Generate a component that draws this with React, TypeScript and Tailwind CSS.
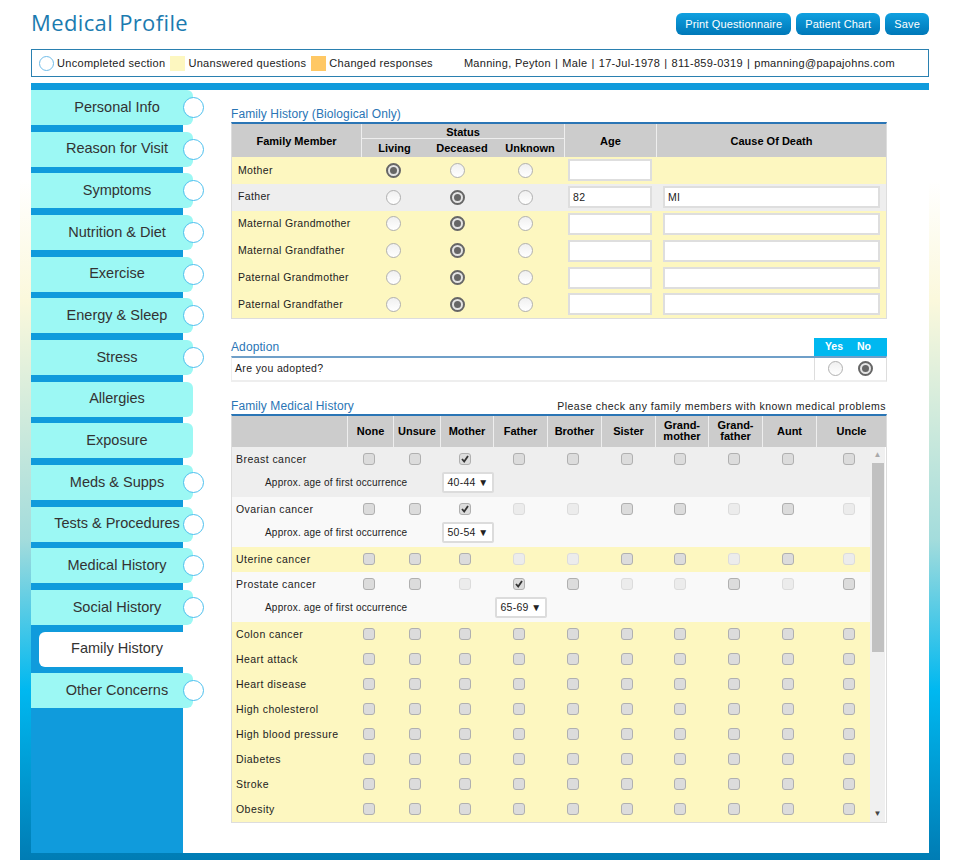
import React from 'react';

const tabs = [
  { name: 'Personal Info', dot: true },
  { name: 'Reason for Visit', dot: true },
  { name: 'Symptoms', dot: true },
  { name: 'Nutrition & Diet', dot: true },
  { name: 'Exercise', dot: true },
  { name: 'Energy & Sleep', dot: true },
  { name: 'Stress', dot: true },
  { name: 'Allergies', dot: false },
  { name: 'Exposure', dot: false },
  { name: 'Meds & Supps', dot: true },
  { name: 'Tests & Procedures', dot: true },
  { name: 'Medical History', dot: true },
  { name: 'Social History', dot: true },
  { name: 'Family History', dot: false, active: true },
  { name: 'Other Concerns', dot: true },
];

const patient = ['Manning, Peyton', 'Male', '17-Jul-1978', '811-859-0319', 'pmanning@papajohns.com'];

const Radio = ({ on }: { on?: boolean }) =>
  on ? (
    <span className="w-[15px] h-[15px] rounded-full border-2 border-[#666] bg-[#e4e4e4] flex items-center justify-center">
      <span className="w-[7px] h-[7px] rounded-full bg-[#666]" />
    </span>
  ) : (
    <span className="w-[15px] h-[15px] rounded-full border border-[#b0b0b0] bg-gradient-to-b from-[#f0f0f0] to-white" />
  );

// n = normal, d = disabled, c = checked
const Check = ({ kind }: { kind: string }) => {
  if (kind === 'd') return <span className="w-[12px] h-[12px] rounded-[3px] border border-[#dcdcdc] bg-[#ececec]" />;
  return (
    <span className="w-[12px] h-[12px] rounded-[3px] border border-[#b0b0b0] bg-[#dcdcdc] flex items-center justify-center">
      {kind === 'c' && (
        <svg width="10" height="10" viewBox="0 0 10 10">
          <path d="M2 5 L4.2 7.6 L8 2" fill="none" stroke="#333" strokeWidth="1.8" />
        </svg>
      )}
    </span>
  );
};

const members = [
  { name: 'Mother', status: 0, bg: 'bg-[#fdf7c0]', age: '', cause: null as string | null },
  { name: 'Father', status: 1, bg: 'bg-[#eeeeee]', age: '82', cause: 'MI' },
  { name: 'Maternal Grandmother', status: 1, bg: 'bg-[#fdf7c0]', age: '', cause: '' },
  { name: 'Maternal Grandfather', status: 1, bg: 'bg-[#fdf7c0]', age: '', cause: '' },
  { name: 'Paternal Grandmother', status: 1, bg: 'bg-[#fdf7c0]', age: '', cause: '' },
  { name: 'Paternal Grandfather', status: 1, bg: 'bg-[#fdf7c0]', age: '', cause: '' },
];

const heads = ['None', 'Unsure', 'Mother', 'Father', 'Brother', 'Sister', 'Grand-\nmother', 'Grand-\nfather', 'Aunt', 'Uncle'];
const headWidths = ['w-[46px]', 'w-[47px]', 'w-[53px]', 'w-[54px]', 'w-[54px]', 'w-[54px]', 'w-[53px]', 'w-[54px]', 'w-[54px]', 'w-[69px]'];
const bodyCols = 'grid grid-cols-[116px_42px_50px_50px_58px_50px_58px_48px_60px_48px_58px]';

const conditions = [
  { name: 'Breast cancer', checks: 'nncnnnnnnn', bg: 'bg-[#eeeeee]', age: '40-44', ageCol: 'mother' },
  { name: 'Ovarian cancer', checks: 'nncddnndnd', bg: 'bg-[#f9f9f9]', age: '50-54', ageCol: 'mother' },
  { name: 'Uterine cancer', checks: 'nnnddnndnd', bg: 'bg-[#fdf7c0]' },
  { name: 'Prostate cancer', checks: 'nndcnddndn', bg: 'bg-[#f9f9f9]', age: '65-69', ageCol: 'father' },
  { name: 'Colon cancer', checks: 'nnnnnnnnnn', bg: 'bg-[#fdf7c0]' },
  { name: 'Heart attack', checks: 'nnnnnnnnnn', bg: 'bg-[#fdf7c0]' },
  { name: 'Heart disease', checks: 'nnnnnnnnnn', bg: 'bg-[#fdf7c0]' },
  { name: 'High cholesterol', checks: 'nnnnnnnnnn', bg: 'bg-[#fdf7c0]' },
  { name: 'High blood pressure', checks: 'nnnnnnnnnn', bg: 'bg-[#fdf7c0]' },
  { name: 'Diabetes', checks: 'nnnnnnnnnn', bg: 'bg-[#fdf7c0]' },
  { name: 'Stroke', checks: 'nnnnnnnnnn', bg: 'bg-[#fdf7c0]' },
  { name: 'Obesity', checks: 'nnnnnnnnnn', bg: 'bg-[#fdf7c0]' },
];

const SectionTitle = ({ children }: { children: React.ReactNode }) => (
  <span className="text-[12px] tracking-[0.1px] text-[#2a75b5]">{children}</span>
);

const AgeSelect = ({ value }: { value: string }) => (
  <span className="w-[52px] h-[21px] rounded-[2px] border-2 border-[#dcdcdc] bg-white pl-[3px] pr-[2px] pt-[1px] flex items-center justify-between text-[10.5px] tracking-[0.3px]">
    {value}
    <span className="text-[10px] mr-[2px]">▼</span>
  </span>
);

export default function App() {
  return (
    <div className="w-[960px] h-[860px] bg-white overflow-hidden font-['Liberation_Sans',Arial,sans-serif] text-[11px] text-[#222]">
      <div className="w-[920px] h-[860px] ml-[20px] px-[11px] pb-[7px] bg-[linear-gradient(180deg,#ffffff_0px,#ffffff_180px,#fbf8dc_300px,#a3dcdc_540px,#00b8f0_690px,#007cb4_860px)]">
        <div className="h-full bg-white flex flex-col">
          {/* title + buttons */}
          <div className="h-[49px] flex items-start justify-between shrink-0">
            <h1 className="mt-[8px] text-[22px] leading-[28px] tracking-[0.37px] text-[#1b7bb0] font-['Open_Sans',sans-serif]">Medical Profile</h1>
            <div className="flex gap-[5px] mt-[13px]">
              {['Print Questionnaire', 'Patient Chart', 'Save'].map((label) => (
                <button
                  key={label}
                  className="h-[22px] px-[9px] rounded-[6px] bg-gradient-to-b from-[#10a0e0] to-[#0078b8] text-[11px] tracking-[0.15px] text-white"
                >
                  {label}
                </button>
              ))}
            </div>
          </div>

          {/* legend */}
          <div className="h-[28px] shrink-0 border border-[#2a80b0] flex items-center pl-[7px] text-[11px] tracking-[0.3px] whitespace-pre">
            <span className="w-[15px] h-[15px] shrink-0 rounded-full border-[1.5px] border-[#70bce8] bg-white mr-[3px]" />
            <span>Uncompleted section</span>
            <span className="w-[15px] h-[15px] shrink-0 bg-[#fdf7c0] ml-[5px] mr-[3px]" />
            <span>Unanswered questions</span>
            <span className="w-[15px] h-[15px] shrink-0 bg-[#ffc864] ml-[5px] mr-[3px]" />
            <span>Changed responses</span>
            <span className="ml-[31px]">
              {patient.map((p, i) => (
                <React.Fragment key={p}>
                  {i > 0 && <span className="mx-[0.75px]"> | </span>}
                  {p}
                </React.Fragment>
              ))}
            </span>
          </div>

          <div className="h-[7px] mt-[6px] shrink-0 bg-[#109bdc]" />

          <div className="flex-1 flex">
            {/* sidebar */}
            <div className="w-[152px] shrink-0 bg-[#109bdc]">
              {tabs.map((tab) =>
                tab.active ? (
                  <div key={tab.name} className="h-[35px] mb-[6.67px] ml-[8px] rounded-l-[6px] bg-white flex items-center justify-center pl-[12px] text-[14.5px] text-[#333]">
                    {tab.name}
                  </div>
                ) : (
                  <div
                    key={tab.name}
                    className="relative h-[35px] w-[162px] mb-[6.67px] rounded-r-[6px] bg-[#9cf8f4] flex items-center justify-center pl-[10px] text-[14.5px] text-[#333] whitespace-nowrap"
                  >
                    {tab.name}
                    {tab.dot && (
                      <span className="absolute right-[-11px] top-[7px] w-[21px] h-[21px] rounded-full border-[1.5px] border-[#4cc0ee] bg-white" />
                    )}
                  </div>
                ),
              )}
            </div>

            {/* main */}
            <div className="flex-1 pl-[48px] pr-[43px] pt-[16px]">
              <div className="h-[16px] leading-[16px]"><SectionTitle>Family History (Biological Only)</SectionTitle></div>
              <div className="border-t-2 border-[#2a75b5] border-b border-l border-r border-b-[#ddd] border-l-[#ddd] border-r-[#ddd]">
                <div className="flex h-[33px] bg-[#cccccc] font-bold text-[11px] text-black">
                  <div className="w-[130px] pt-[1px] flex items-center justify-center border-r border-[#eee]">Family Member</div>
                  <div className="w-[203px] flex flex-col border-r border-[#eee]">
                    <div className="h-[15px] pt-[2px] flex items-center justify-center border-b border-[#eee]">Status</div>
                    <div className="flex-1 flex items-center">
                      <span className="w-[65px] text-center">Living</span>
                      <span className="w-[70px] text-center">Deceased</span>
                      <span className="w-[66px] text-center">Unknown</span>
                    </div>
                  </div>
                  <div className="w-[92px] pt-[1px] flex items-center justify-center border-r border-[#eee]">Age</div>
                  <div className="flex-1 pt-[1px] flex items-center justify-center">Cause Of Death</div>
                </div>
                {members.map((m) => (
                  <div key={m.name} className={`flex h-[26.8px] items-center text-[10.5px] tracking-[0.35px] ${m.bg}`}>
                    <div className="w-[130px] pl-[6px]">{m.name}</div>
                    <div className="w-[62px] flex justify-center"><Radio on={m.status === 0} /></div>
                    <div className="w-[66px] flex justify-center"><Radio on={m.status === 1} /></div>
                    <div className="w-[70px] flex justify-center"><Radio /></div>
                    <div className="w-[8px]" />
                    <input
                      readOnly
                      value={m.age}
                      className="w-[84px] h-[22px] bg-white border-2 border-[#dedede] px-[3px] outline-none"
                    />
                    {m.cause !== null && (
                      <input
                        readOnly
                        value={m.cause}
                        className="ml-[11px] w-[217px] h-[22px] bg-white border-2 border-[#dedede] px-[3px] outline-none"
                      />
                    )}
                  </div>
                ))}
              </div>

              {/* adoption */}
              <div className="mt-[19px] flex items-end justify-between h-[18px]">
                <SectionTitle>Adoption</SectionTitle>
                <div className="w-[73px] h-[18px] bg-[#00b8f0] flex items-center text-white font-bold text-[10.5px]">
                  <span className="w-[40px] text-center">Yes</span>
                  <span className="w-[20px] text-center">No</span>
                </div>
              </div>
              <div className="h-[26px] flex border-t-2 border-t-[#6f9fc8] border-b-2 border-b-[#eeeeee] border-l border-l-[#eee] border-r border-r-[#ddd] items-center text-[10.5px] tracking-[0.35px]">
                <div className="flex-1 pl-[3px] pt-[1px]">Are you adopted?</div>
                <div className="w-[72px] h-full border-l border-[#ddd] flex items-center">
                  <span className="w-[41px] flex justify-center"><Radio /></span>
                  <span className="w-[19px] flex justify-center"><Radio on /></span>
                </div>
              </div>

              {/* family medical history */}
              <div className="mt-[15px] h-[17px] pb-[1px] flex items-end justify-between leading-[14px]">
                <SectionTitle>Family Medical History</SectionTitle>
                <span className="tracking-[0.5px] text-[10.5px] pr-[1px]">Please check any family members with known medical problems</span>
              </div>
              <div className="border-t-2 border-[#2a75b5] border-b border-b-[#ddd] border-l border-l-[#ddd] border-r border-r-[#ddd]">
                <div className="flex h-[31px] bg-[#cccccc] font-bold text-[11px] leading-[11px] text-black">
                  <div className="w-[116px] border-r border-[#eee]" />
                  {heads.map((h, i) => (
                    <div key={h} className={`${headWidths[i]} ${i < 9 ? 'border-r border-[#eee]' : ''} flex items-center justify-center text-center whitespace-pre-line`}>
                      {h}
                    </div>
                  ))}
                </div>
                <div className="flex">
                  <div className="w-[638px] text-[10.5px] tracking-[0.45px]">
                    {conditions.map((c) => (
                      <div key={c.name} className={c.bg}>
                        <div className={`${bodyCols} h-[25px] items-center`}>
                          <div className="pl-[4px] pt-[1px]">{c.name}</div>
                          {c.checks.split('').map((k, i) => (
                            <div key={i} className={`flex justify-center ${i === 9 ? 'pl-[16px]' : ''}`}><Check kind={k} /></div>
                          ))}
                        </div>
                        {c.age && (
                          <div className="h-[25px] pb-[4px] flex items-center text-[10px] tracking-[0.2px]">
                            <span className="ml-[33px]">Approx. age of first occurrence</span>
                            <span className={c.ageCol === 'father' ? 'ml-[88px]' : 'ml-[35px]'}>
                              <AgeSelect value={c.age} />
                            </span>
                          </div>
                        )}
                      </div>
                    ))}
                  </div>
                  <div className="w-[15px] bg-[#f0f0f0] flex flex-col items-center">
                    <span className="h-[16px] flex items-center text-[8px] text-[#aaa]">▲</span>
                    <span className="w-[12px] h-[189px] bg-[#c1c1c1]" />
                    <span className="mt-auto h-[16px] flex items-center text-[8px] text-[#444]">▼</span>
                  </div>
                </div>
              </div>
            </div>
          </div>
        </div>
      </div>
    </div>
  );
}
